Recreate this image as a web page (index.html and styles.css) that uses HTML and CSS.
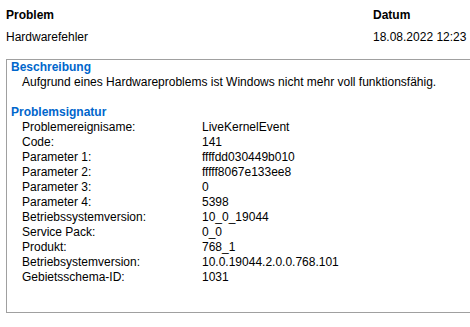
FILE: index.html
```html
<!DOCTYPE html>
<html lang="de">
<head>
<meta charset="utf-8">
<link rel="stylesheet" href="styles.css">
</head>
<body>
<div class="page">
  <div class="header">
    <div class="col col-problem">
      <div class="col-title">Problem</div>
      <div class="col-value">Hardwarefehler</div>
    </div>
    <div class="col col-date">
      <div class="col-title">Datum</div>
      <div class="col-value">18.08.2022 12:23</div>
    </div>
  </div>
  <div class="details">
    <div class="section-title">Beschreibung</div>
    <div class="desc">Aufgrund eines Hardwareproblems ist Windows nicht mehr voll funktionsfähig.</div>
    <div class="section-title sig-title">Problemsignatur</div>
    <div class="sig">
      <div class="k">Problemereignisame:</div><div class="v">LiveKernelEvent</div>
      <div class="k">Code:</div><div class="v">141</div>
      <div class="k">Parameter 1:</div><div class="v">ffffdd030449b010</div>
      <div class="k">Parameter 2:</div><div class="v">fffff8067e133ee8</div>
      <div class="k">Parameter 3:</div><div class="v">0</div>
      <div class="k">Parameter 4:</div><div class="v">5398</div>
      <div class="k">Betriebssystemversion:</div><div class="v">10_0_19044</div>
      <div class="k">Service Pack:</div><div class="v">0_0</div>
      <div class="k">Produkt:</div><div class="v">768_1</div>
      <div class="k">Betriebsystemversion:</div><div class="v">10.0.19044.2.0.0.768.101</div>
      <div class="k">Gebietsschema-ID:</div><div class="v">1031</div>
    </div>
  </div>
</div>
</body>
</html>
```
FILE: styles.css
```css
html, body {
  margin: 0;
  padding: 0;
  background: #ffffff;
  overflow: hidden;
}
body {
  font-family: "Liberation Sans", Arial, sans-serif;
  font-size: 12px;
  line-height: 15px;
  color: #000000;
}
.page {
  width: 470px;
  height: 327px;
  overflow: hidden;
}
.header {
  display: flex;
  padding: 8px 0 0 6px;
  height: 59px;
  box-sizing: border-box;
}
.col {
  display: flex;
  flex-direction: column;
  gap: 7px;
}
.col-problem {
  width: 367px;
}
.col-title {
  font-weight: bold;
}
.details {
  margin-left: 6px;
  width: 500px;
  height: 254px;
  box-sizing: border-box;
  border: 1px solid #a0a0a0;
  padding: 0 0 0 4px;
}
.section-title {
  color: #0066cc;
  font-weight: bold;
}
.desc {
  padding-left: 11px;
}
.sig-title {
  margin-top: 15px;
}
.sig {
  display: grid;
  grid-template-columns: 180px auto;
  padding-left: 11px;
}
```
